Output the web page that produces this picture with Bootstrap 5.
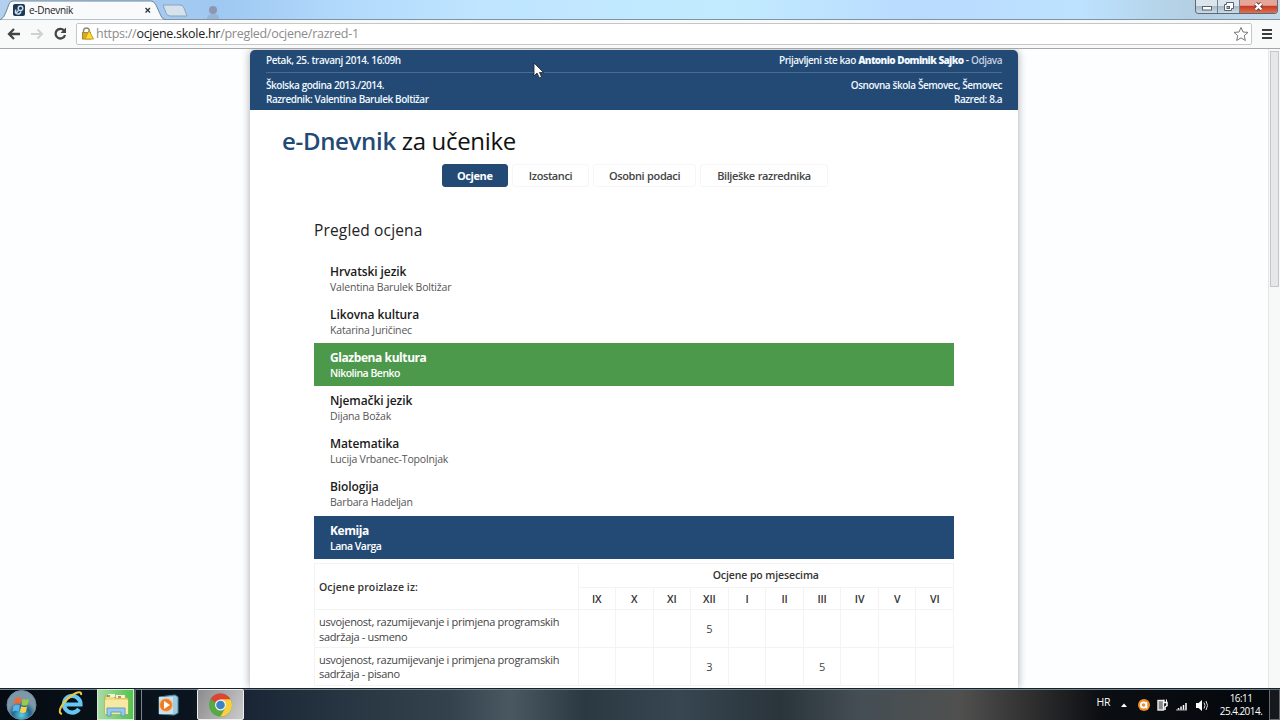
<!DOCTYPE html>
<html lang="hr">
<head>
    <meta charset="UTF-8">
    <meta name="viewport" content="width=device-width, initial-scale=1.0">
    <title>e-Dnevnik</title>
    <link href="https://cdn.jsdelivr.net/npm/bootstrap@5.3.0/dist/css/bootstrap.min.css" rel="stylesheet">
    <style>
        :root {
            --school-blue: #234a75;
            --school-green: #4c994b;
            --grid-line: #f3f3f4;
        }
        body {
            width: 1280px;
            height: 720px;
            font-family: "Open Sans", "Noto Sans", sans-serif;
            font-size: 11px;
            line-height: 14px;
            color: #333;
            background-color: #fcfeff;
        }
        svg { display: block; flex: none; }

        /* browser window */
        .tab-strip {
            height: 20px;
            background: linear-gradient(90deg, #b3d0ef 0, #9fc8f2 220px, #b0d8fb 330px, #bfe5ff 480px, #c2ebff 730px, #b9dbff 920px, #bde2ff 1080px, #b3cfe2 1190px, #c3d9e8 1280px);
            border-bottom: 1px solid #7f92a6;
        }
        .tab-art { left: 0; top: 0; }
        .tab-content-row { padding-left: 13px; }
        .tab-label { font-size: 10px; letter-spacing: -.3px; padding-left: 4px; width: 119px; color: #222; }
        .win-buttons { width: 83px; height: 14px; margin-right: 2px; border: 1px solid #5c6874; border-top: 0; border-radius: 0 0 4px 4px; overflow: hidden; }
        .win-btn { width: 22px; background: linear-gradient(#dbe5ed 45%, #a9bac8 50%, #cbdbe7); border-right: 1px solid #72808d; }
        .win-close { background: linear-gradient(#e5a598 40%, #c73c24 50%, #dc7154); }
        .toolbar { height: 29px; background-color: #f8f9f9; border-bottom: 1px solid #a5a7a9; }
        .address {
            width: 1176px;
            height: 22px;
            margin-left: 8px;
            border: 1px solid #c4c6c8;
            border-radius: 2px;
            background-color: #fff;
            font-size: 12.5px;
            letter-spacing: -.28px;
            color: #8b8b8b;
        }
        .address b { font-weight: 400; color: #222; }

        /* page */
        .viewport { height: 639px; }
        .sheet { width: 768px; margin-left: 250px; margin-top: 1px; background-color: #fff; border-radius: 5px 5px 0 0; box-shadow: 0 0 9px rgba(0,0,0,.35); }
        .sheet-head {
            height: 59.5px;
            padding: 2.500px 16px 0;
            background-color: var(--school-blue);
            border-radius: 5px 5px 0 0;
            color: #f1f8ff;
            font-size: 10px;
            font-weight: 600;
            letter-spacing: -.47px;
            word-spacing: .3px;
            line-height: 14.4px;
        }
        .head-top { height: 20px; border-bottom: 1px solid #4a6b91; margin-bottom: 5px; }
        .head-top > span:first-child { letter-spacing: -.42px; }
        .head-top b { letter-spacing: -.65px; }
        .head-top a { color: #c3d0e2; text-decoration: none; }
        .brand { font-size: 24px; line-height: 32px; letter-spacing: -.32px; padding: 15px 0 0 32px; color: #111; }
        .brand b { font-weight: 600; color: var(--school-blue); }
        .menu { margin: 7px 0 0 191.5px; gap: 4px; font-weight: 600; letter-spacing: -.4px; word-spacing: .5px; }
        .menu-item { height: 23px; line-height: 22px; border: 1px solid #f6f6f7; border-radius: 3px; text-align: center; color: #444; }
        .menu-item.active { background-color: var(--school-blue); border-color: var(--school-blue); color: #fff; font-weight: 700; }
        .overview { margin: 31px 64px 0; }
        .overview h2 { font-size: 15.5px; line-height: 24px; letter-spacing: .15px; margin-bottom: 15px; color: #222; font-weight: 400; }
        .subject { height: 43.2px; padding: 6px 16px 0; font-size: 10.5px; line-height: 15px; letter-spacing: -.17px; color: #555; }
        .subject strong { display: block; font-size: 12px; line-height: 17px; letter-spacing: -.1px; font-weight: 600; color: #1a1a1a; }
        .subject.picked { color: #fff; font-weight: 600; letter-spacing: -.5px; }
        .subject.picked strong { color: #fff; font-weight: 700; letter-spacing: -.42px; }
        .bg-school-green { background-color: var(--school-green); }
        .bg-school-blue { background-color: var(--school-blue); }
        .marks { width: 640px; margin-top: 4px; table-layout: fixed; border-collapse: collapse; }
        .marks th, .marks td { border: 1px solid var(--grid-line); padding: 0; text-align: center; vertical-align: middle; }
        .marks th { font-weight: 600; font-size: 10.5px; letter-spacing: -.1px; }
        .marks .criterion { text-align: left; padding-left: 4px; }
        .marks th.criterion { letter-spacing: .1px; }
        .marks tbody tr { height: 37.7px; line-height: 14.4px; color: #444; }
        .marks tbody .criterion { letter-spacing: -.32px; }
        .marks tbody td { padding-top: 2px; }
        .scroll-track { width: 12px; background-color: #f7f8f8; border-left: 1px solid #e3e5e6; }
        .scroll-thumb { width: 9px; height: 236px; margin: 2px 0 0 1px; background-color: #e6e7e8; border: 1px solid #c4c6c8; }
        .pointer { left: 533px; top: 61px; }

        /* taskbar */
        .taskbar {
            height: 32px;
            border-top: 1px solid #15222c;
            box-shadow: inset 0 1px #718086;
            background: linear-gradient(90deg, #050b12 0, #0b141e 190px, #1a2636 250px, #263541 340px, #33424c 450px, #495861 510px, #2b3942 585px, #374651 680px, #2a343b 780px, #444e54 860px, #50504f 960px, #2b2b2c 1040px, #0b0e12 1100px, #03060a 1280px);
            color: #fff;
        }
        .task-cell { height: 31px; }
        .task-explorer { width: 37px; margin-left: 10px; background: linear-gradient(90deg, #a9dba6, #51c44d); border: 1px solid #d3ebd4; }
        .task-stack { width: 8px; border-right: 1px solid #77858c; border-left: 2px solid #52635d; }
        .task-chrome { width: 47px; margin-left: 9px; background: linear-gradient(120deg, #8c8c8e, #cbcbcc); border: 1px solid #eee; border-radius: 2px; }
        .lang-label { font-size: 10.5px; letter-spacing: -.4px; padding-bottom: 5px; margin-right: 6px; }
        .clock { width: 56px; padding-top: 1px; font-size: 10px; line-height: 13.5px; letter-spacing: -.55px; text-align: center; }
        .show-desktop { width: 11px; border: 1px solid #656a6e; background-color: #15191d; }
    </style>
</head>
<body class="overflow-hidden">
    <div class="tab-strip d-flex justify-content-between position-relative">
        <svg class="tab-art position-absolute" width="230" height="20">
            <path d="M0 20 Q4 18 6 12 L9 4 Q10 1 13 1 H151 Q154 1 156 5 L161 16 Q162 19 166 20z" fill="#f9fafb" stroke="#71869a"/>
            <path d="M163 5h17q3 0 4 3l3 8h-17q-3 0-4-3z" fill="#d5e2ee" stroke="#8ca3b8"/>
            <path d="M207 20v-2q1-4 5-4h3q4 0 4 4v2z" fill="#879cb4" opacity=".4"/><circle cx="213" cy="10" r="4" fill="#806e78" opacity=".55"/>
        </svg>
        <div class="tab-content-row d-flex align-items-center position-relative">
            <svg width="12" height="12">
                <rect width="12" height="12" rx="2" fill="#1c3854"/>
                <g fill="none" stroke="#c7dcec" stroke-width="1.5"><circle cx="7.500" cy="4.300" r="2.300"/><path d="M5.500 6.500L3 9M3 5.500q-2 4 1.500 4.500 3 0 3.500-2.500"/></g>
            </svg>
            <span class="tab-label">e-Dnevnik</span>
            <svg width="8" height="8"><path d="M1.500 2l4.500 4.500M6 2L1.500 6.500" stroke="#333" stroke-width="1.3"/></svg>
        </div>
        <div class="win-buttons d-flex">
            <div class="win-btn"><svg width="22" height="13"><rect x="6.500" y="6.500" width="9" height="3.500" fill="#fff" stroke="#59636e"/></svg></div>
            <div class="win-btn"><svg width="22" height="13"><path d="M8.500 2.500h7v6h-2v2h-7v-6h2z" fill="#fff" stroke="#59636e"/><rect x="9" y="6.500" width="2.500" height="2" fill="#9eabb7" stroke="#59636e"/></svg></div>
            <div class="win-close flex-fill"><svg width="37" height="13"><path d="M15.500 3.500l6 6M21.500 3.500l-6 6" stroke="#61383a" stroke-width="4"/><path d="M15.500 3.500l6 6M21.500 3.500l-6 6" stroke="#fff" stroke-width="2.400"/></svg></div>
        </div>
    </div>

    <div class="toolbar d-flex align-items-center">
        <svg width="68" height="28" fill="none" stroke="#444" stroke-width="2.300">
            <path d="M9 14h11M14 9l-5 5 5 5"/>
            <path d="M31 14h11M37.500 9.500l4.500 4.500-4.500 4.500" stroke="#cfd0d1" stroke-width="2"/>
            <path d="M64 10.500a4.800 4.800 0 1 0 1 4.500"/><path d="M66 7.500v5.500h-5.500z" fill="#444" stroke="none"/>
        </svg>
        <div class="address d-flex align-items-center">
            <svg width="19" height="20">
                <path d="M6.500 9V7a3 3 0 0 1 6 0v3" fill="none" stroke="#8b8b7d" stroke-width="1.500"/>
                <rect x="5.500" y="8.500" width="8" height="6.500" fill="#dca823" stroke="#a3893a"/>
                <path d="M12 6.500l4.500 8.500h-8.500z" fill="#ffdc2e" stroke="#c59b20"/>
            </svg>
            <span class="flex-fill">https://<b>ocjene.skole.hr</b>/pregled/ocjene/razred-1</span>
            <svg width="20" height="20"><path d="M10 3.500l2 4.500 5 .4-3.800 3.300 1.200 4.800-4.400-2.600-4.400 2.600 1.200-4.800-3.800-3.300 5-.4z" fill="#fff" stroke="#777"/></svg>
        </div>
        <svg width="27" height="28"><path d="M10 10h10M10 14h10M10 18h10" stroke="#3b3b3b" stroke-width="2.200"/></svg>
    </div>

    <div class="viewport d-flex overflow-hidden">
        <main class="sheet">
            <header class="sheet-head">
                <div class="head-top d-flex justify-content-between">
                    <span>Petak, 25. travanj 2014. 16:09h</span>
                    <span>Prijavljeni ste kao <b>Antonio Dominik Sajko</b> - <a href="#">Odjava</a></span>
                </div>
                <div class="d-flex justify-content-between">
                    <div>Školska godina 2013./2014.<br>Razrednik: Valentina Barulek Boltižar</div>
                    <div class="text-end">Osnovna škola Šemovec, Šemovec<br>Razred: 8.a</div>
                </div>
            </header>
            <div class="brand"><b>e-Dnevnik</b> za učenike</div>
            <nav class="menu d-flex">
                <div class="menu-item active" style="width: 66.5px">Ocjene</div>
                <div class="menu-item" style="width: 77px">Izostanci</div>
                <div class="menu-item" style="width: 103px">Osobni podaci</div>
                <div class="menu-item" style="width: 128px">Bilješke razrednika</div>
            </nav>
            <section class="overview">
                <h2>Pregled ocjena</h2>
                <div class="subject"><strong>Hrvatski jezik</strong>Valentina Barulek Boltižar</div>
                <div class="subject"><strong>Likovna kultura</strong>Katarina Juričinec</div>
                <div class="subject picked bg-school-green"><strong>Glazbena kultura</strong>Nikolina Benko</div>
                <div class="subject"><strong>Njemački jezik</strong>Dijana Božak</div>
                <div class="subject"><strong>Matematika</strong>Lucija Vrbanec-Topolnjak</div>
                <div class="subject"><strong>Biologija</strong>Barbara Hadeljan</div>
                <div class="subject picked bg-school-blue"><strong>Kemija</strong>Lana Varga</div>
                <table class="marks">
                    <colgroup><col style="width: 263.5px"><col span="10"></colgroup>
                    <thead>
                        <tr style="height: 24px"><th class="criterion" rowspan="2">Ocjene proizlaze iz:</th><th colspan="10">Ocjene po mjesecima</th></tr>
                        <tr style="height: 22.5px"><th>IX</th><th>X</th><th>XI</th><th>XII</th><th>I</th><th>II</th><th>III</th><th>IV</th><th>V</th><th>VI</th></tr>
                    </thead>
                    <tbody>
                        <tr><td class="criterion">usvojenost, razumijevanje i primjena programskih<br>sadržaja - usmeno</td><td></td><td></td><td></td><td>5</td><td></td><td></td><td></td><td></td><td></td><td></td></tr>
                        <tr><td class="criterion">usvojenost, razumijevanje i primjena programskih<br>sadržaja - pisano</td><td></td><td></td><td></td><td>3</td><td></td><td></td><td>5</td><td></td><td></td><td></td></tr>
                    </tbody>
                </table>
            </section>
        </main>
        <div class="scroll-track ms-auto"><div class="scroll-thumb"></div></div>
    </div>

    <footer class="taskbar d-flex align-items-center">
        <svg width="87" height="31">
            <defs>
                <radialGradient id="orb" cy=".85"><stop offset="0" stop-color="#59d1ee"/><stop offset=".6" stop-color="#22658c"/><stop offset="1" stop-color="#7d98a8"/></radialGradient>
            </defs>
            <circle cx="21.500" cy="16" r="14.500" fill="url(#orb)" stroke="#70899b"/>
            <path d="M15 10q4-3 6.500-1l-1.300 6q-3-1.500-6.500.5z" fill="#ef6a34"/><path d="M22.700 10q3 1.500 6.300 0l-1.500 6q-3 1.500-6 0z" fill="#9bcb45"/>
            <path d="M13.500 17q3.500-2 6.500-.5l-1.300 6q-3-1.500-6.200.3z" fill="#5bb4ef"/><path d="M21.200 17.300q3 1.500 6 .2l-1.400 5.500q-3 1.700-6 .3z" fill="#fbd047"/>
            <path d="M79 20a8.300 8.300 0 1 1 1.500-4.500H65" fill="none" stroke="#63c9f2" stroke-width="4.200"/>
            <path d="M62 25q-4-1-1-7 5-9 15-14 6-2 5 2" fill="none" stroke="#f0c63c" stroke-width="2"/>
        </svg>
        <div class="task-cell task-explorer">
            <svg width="35" height="29">
                <path d="M7 6h8l2 2h13v16H7z" fill="#eedb82" stroke="#c3aa51"/><path d="M10 4h7v3h-7zM18 5h9v3h-9z" fill="#f8f2d5"/>
                <path d="M9 6h3" stroke="#4b9b4b" stroke-width="1.500"/><path d="M20 7h3" stroke="#cc5a44" stroke-width="1.500"/>
                <path d="M7 10h23v14H7z" fill="#f8e9a2"/><path d="M9 26v-8h18v8h-4v-4H13v4z" fill="#96c8e8" stroke="#5f9ec6"/>
            </svg>
        </div>
        <div class="task-cell task-stack"></div>
        <svg width="46" height="31">
            <path d="M17 8l16-2 3 2v16l-4 2-15-1z" fill="#9fcbe0" stroke="#4b89a9"/><rect x="17" y="8" width="14" height="17" fill="#c8e1ed"/>
            <circle cx="24" cy="16" r="6.500" fill="#ed7d25" stroke="#f7c492"/><path d="M22 12l6 4-6 4z" fill="#fff"/>
        </svg>
        <div class="task-cell task-chrome">
            <svg width="45" height="29">
                <circle cx="22.500" cy="15" r="11.500" fill="#57a945"/>
                <path d="M22.500 15L12.500 9.300A11.500 11.500 0 0 1 32.500 9.300z" fill="#dd4434"/>
                <path d="M22.500 9.300H32.500A11.500 11.500 0 0 1 22.500 26.500L27.500 17.500z" fill="#fbd03c"/>
                <circle cx="22.500" cy="15" r="5.500" fill="#f4f4f4"/><circle cx="22.500" cy="15" r="4.300" fill="#3f82c4"/>
            </svg>
        </div>
        <span class="lang-label ms-auto">HR</span>
        <svg width="97" height="31">
            <path d="M5 18l3-3.500 3 3.500z" fill="#fff"/>
            <circle cx="28" cy="16" r="6" fill="#ee8d27"/><circle cx="27.500" cy="16" r="2.700" fill="none" stroke="#fff" stroke-width="1.800"/><path d="M30.500 13v6.500" stroke="#fff" stroke-width="1.600"/>
            <rect x="42" y="11.500" width="5.500" height="9.500" fill="#888" stroke="#eee" stroke-width="1.400"/><path d="M47 13.500h4v3l-2 1.500v3" fill="none" stroke="#fff" stroke-width="1.500"/><path d="M48 13v-2.500M50.500 13v-2.500" stroke="#fff"/>
            <path d="M62.500 21v-2M65 21v-3.500M67.500 21v-5M70 21v-7" stroke="#fff" stroke-width="1.500"/><path d="M60 21h11" stroke="#aaa"/>
            <path d="M80 14h2.500l3.500-3v11l-3.500-3H80z" fill="#fff"/><path d="M88 13.500q2 3 0 6M90 12q3 4.500 0 9" fill="none" stroke="#ddd"/>
        </svg>
        <div class="clock">16:11<br>25.4.2014.</div>
        <div class="task-cell show-desktop"></div>
    </footer>

    <svg class="pointer position-absolute" width="12" height="18"><path d="M1 2v13l3-3 2.500 5 2-1L6.500 11.500h4z" fill="#fff" stroke="#222" stroke-width=".8"/></svg>
    <script src="https://cdn.jsdelivr.net/npm/bootstrap@5.3.0/dist/js/bootstrap.bundle.min.js"></script>
</body>
</html>
